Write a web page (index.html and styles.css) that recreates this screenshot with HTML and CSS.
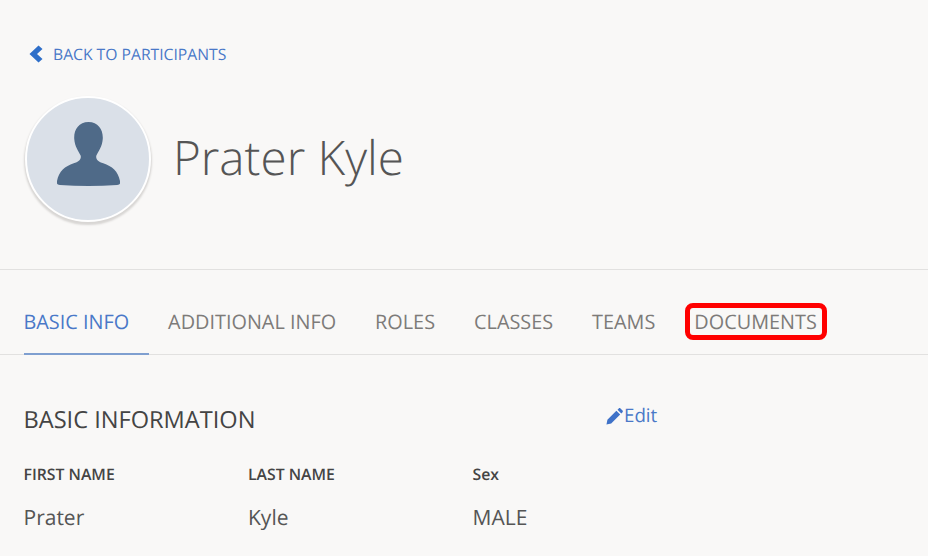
FILE: index.html
```html
<!DOCTYPE html>
<html lang="en">
<head>
    <meta charset="UTF-8">
    <meta name="viewport" content="width=device-width, initial-scale=1.0">
    <title>Prater Kyle</title>
    <link rel="stylesheet" href="styles.css">
</head>
<body>
    <header class="profile-head">
        <a class="back-link" href="#">
            <svg class="back-icon" viewBox="0 0 14 18" width="14" height="18"><path d="M9.5 0.5 L13.5 4 L8 9 L13.5 14 L9.5 17.5 L0.5 9 Z"/></svg>
            BACK TO PARTICIPANTS
        </a>
        <div class="profile-row">
            <div class="avatar">
                <svg viewBox="0 0 64 66" width="63" height="65"><path d="M32 0 C42 0 47 8 46.500 17 C46 25 42 30 40 34 C39 38 42 40 47 42 C56 45 62 50 64 60 C64.500 62.500 64 63.500 61 64 C42 65.500 22 65.500 3 64 C0 63.500 -0.500 62.500 0 60 C2 50 8 45 17 42 C22 40 25 38 24 34 C22 30 18 25 17.500 17 C17 8 22 0 32 0 Z"/></svg>
            </div>
            <h1 class="profile-name">Prater Kyle</h1>
        </div>
    </header>

    <nav class="tabs">
        <a class="tab tab-active" href="#">BASIC INFO</a>
        <a class="tab" href="#">ADDITIONAL INFO</a>
        <a class="tab" href="#">ROLES</a>
        <a class="tab" href="#">CLASSES</a>
        <a class="tab" href="#">TEAMS</a>
        <a class="tab tab-marked" href="#">DOCUMENTS</a>
    </nav>

    <section class="info">
        <div class="info-head">
            <h2>BASIC INFORMATION</h2>
            <a class="edit-link" href="#">
                <svg viewBox="0 0 18 18" width="17" height="17"><path d="M0.500 17.500 L1.500 12.500 L11 3 L15 7 L5.500 16.500 Z M12.200 1.800 L13.500 0.500 C14 0 14.800 0 15.300 0.500 L17.500 2.700 C18 3.200 18 4 17.500 4.500 L16.200 5.800 Z"/></svg>Edit
            </a>
        </div>
        <div class="info-grid">
            <div class="field">
                <div class="field-label">FIRST NAME</div>
                <div class="field-value">Prater</div>
            </div>
            <div class="field">
                <div class="field-label">LAST NAME</div>
                <div class="field-value">Kyle</div>
            </div>
            <div class="field">
                <div class="field-label">Sex</div>
                <div class="field-value">MALE</div>
            </div>
        </div>
    </section>
</body>
</html>
```

FILE: styles.css
```css
body {
    margin: 0;
    height: 556px;
    overflow: hidden;
    font-family: "Open Sans", sans-serif;
    text-rendering: geometricPrecision;
    background-color: #f9f8f7;
    color: #444;
}
a {
    text-decoration: none;
}

/* Header */
.profile-head {
    height: 226px;
    padding: 43px 0 0 25px;
    border-bottom: 1px solid #e2e1e0;
}
.back-link {
    display: flex;
    align-items: center;
    height: 22px;
    font-size: 15.700px;
    color: #4a78c8;
}
.back-icon {
    margin: 0 10px 0 4px;
    fill: #2f6fc9;
}
.profile-row {
    display: flex;
    align-items: center;
    gap: 22px;
    margin-top: 31px;
}
.avatar {
    width: 122px;
    height: 122px;
    border: 2px solid #fff;
    border-radius: 50%;
    background: #dae0e8;
    box-shadow: 0 2px 2px 1px #d8d6d4;
    display: flex;
    align-items: center;
    justify-content: center;
}
.avatar svg {
    fill: #4f6a88;
    margin-bottom: 9px;
}
.profile-name {
    margin: 0 0 6px;
    font-size: 47.600px;
    font-weight: 300;
    color: #555;
}

/* Tabs */
.tabs {
    display: flex;
    gap: 19px;
    padding-left: 23.500px;
    height: 85px;
    box-sizing: border-box;
    border-bottom: 1px solid #e2e1e0;
}
.tab {
    position: relative;
    padding: 37px 20px 0 0;
    margin-bottom: -1px;
    font-size: 19.850px;
    line-height: 30px;
    color: #7d7b79;
}
.tab-active {
    color: #4a78c8;
    border-bottom: 2px solid #7f9fd0;
    box-sizing: border-box;
}
.tab-marked::after {
    content: "";
    position: absolute;
    left: -9px;
    right: 10px;
    top: 33px;
    height: 37px;
    box-sizing: border-box;
    border: 5px solid #f00;
    border-radius: 8px;
}

/* Basic information */
.info {
    padding: 0 0 0 23.500px;
}
.info-head {
    display: flex;
    align-items: flex-start;
    margin-top: 47px;
}
.info-head h2 {
    width: 582.500px;
    margin: -1px 0 0;
    font-size: 23.600px;
    line-height: 36px;
    font-weight: 400;
    color: #444;
}
.edit-link {
    display: flex;
    align-items: center;
    gap: 1px;
    margin-top: -1px;
    font-size: 18.700px;
    line-height: 30px;
    color: #4a78c8;
}
.edit-link svg {
    fill: #3f72c8;
}
.info-grid {
    display: grid;
    grid-template-columns: 224.500px 224.500px 224.500px;
    margin-top: 26px;
}
.field-label {
    font-size: 15.800px;
    line-height: 22px;
    font-weight: 600;
    color: #444;
}
.field-value {
    margin-top: 18px;
    font-size: 21px;
    line-height: 30px;
    color: #555;
}
```
